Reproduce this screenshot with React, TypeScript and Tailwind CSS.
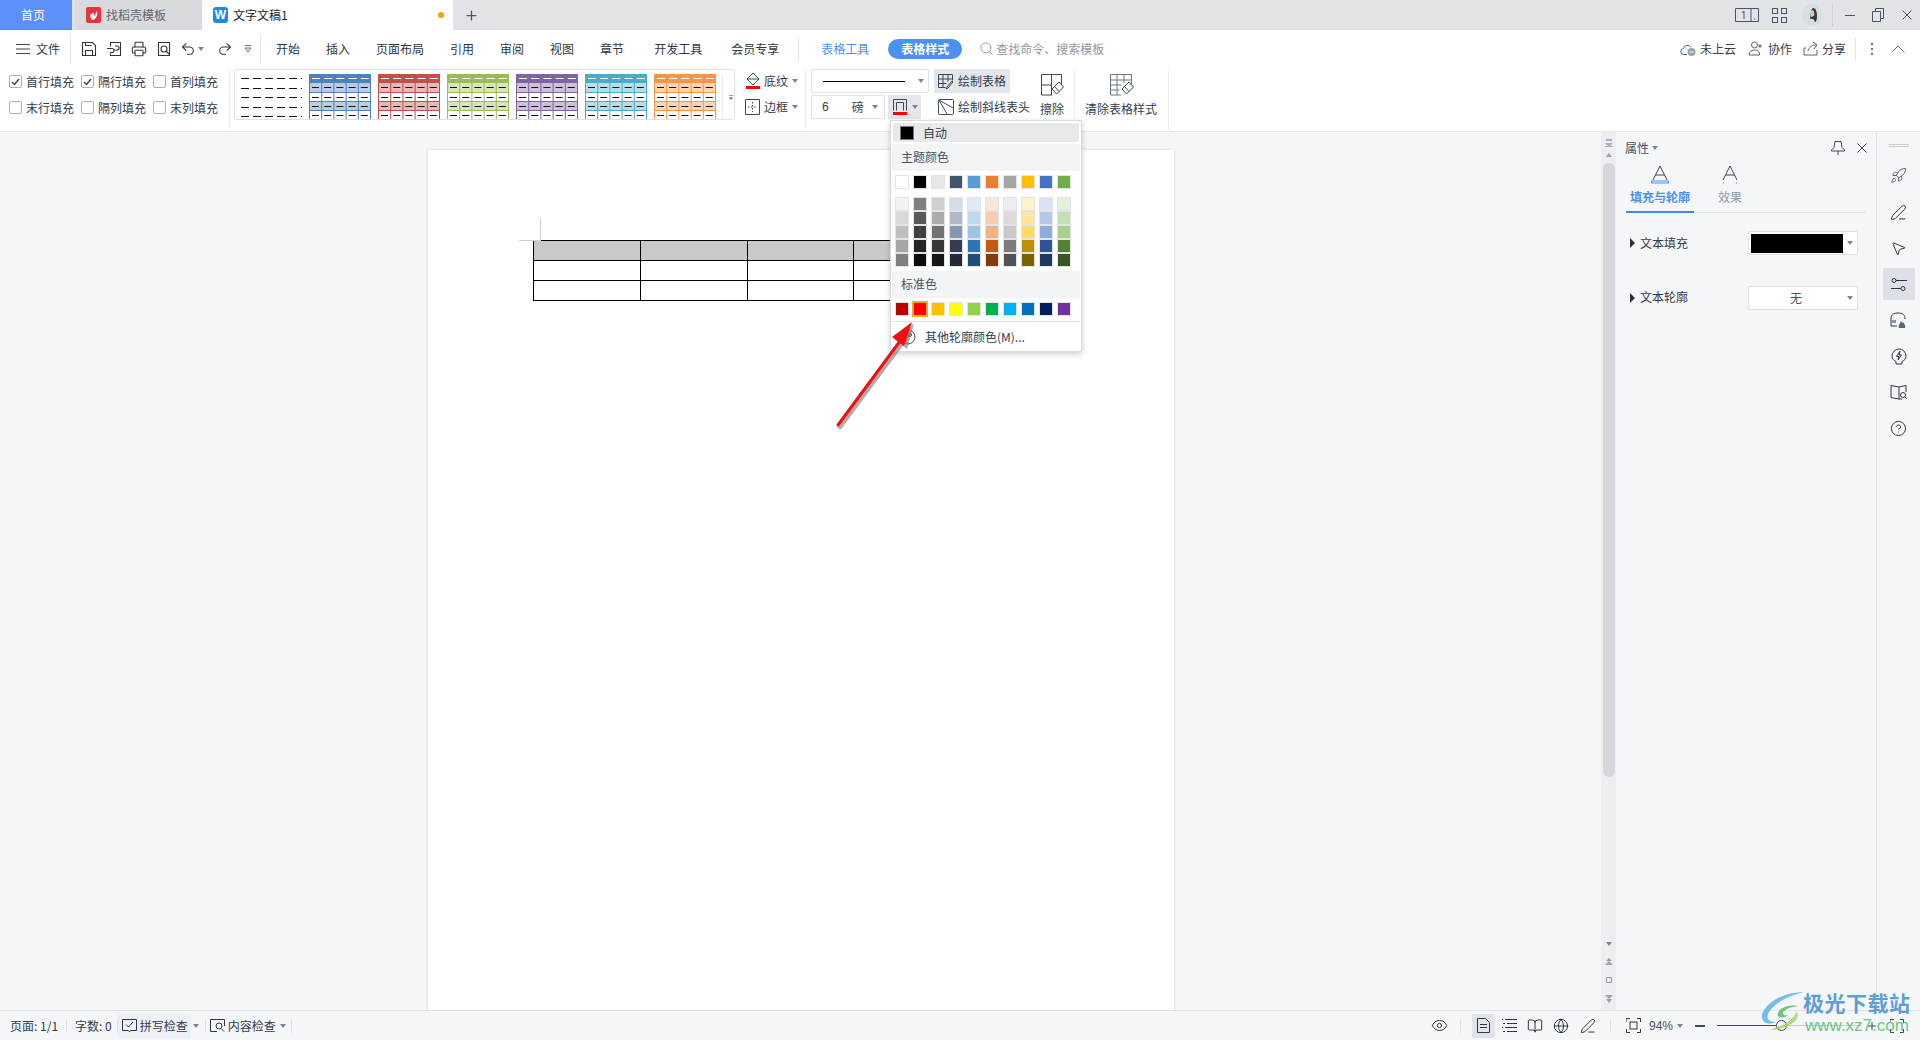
import {
  BookOpen, CircleHelp, Eye, Globe, MousePointer2, PenLine, Plus, Printer,
  Redo2, Rocket, Search, Undo2,
} from 'lucide-react';

const menuItems = ['开始', '插入', '页面布局', '引用', '审阅', '视图', '章节'];

const checks = [
  { label: '首行填充', on: true },
  { label: '隔行填充', on: true },
  { label: '首列填充', on: false },
  { label: '末行填充', on: false },
  { label: '隔列填充', on: false },
  { label: '末列填充', on: false },
];

const tableStyles = [
  { main: '#4f81bd', light: '#b8cce4' },
  { main: '#c0504d', light: '#e6b8b7' },
  { main: '#9bbb59', light: '#d8e4bc' },
  { main: '#8064a2', light: '#ccc0da' },
  { main: '#4bacc6', light: '#b7dee8' },
  { main: '#f79646', light: '#fcd5b4' },
];

const themeRow = ['#ffffff', '#000000', '#e7e6e6', '#44546a', '#5b9bd5', '#ed7d31', '#a5a5a5', '#ffc000', '#4472c4', '#70ad47'];

const themeGrid = [
  ['#f2f2f2', '#808080', '#d0cece', '#d6dce5', '#deebf7', '#fbe5d6', '#ededed', '#fff2cc', '#dae3f3', '#e2f0d9'],
  ['#d9d9d9', '#595959', '#aeabab', '#adb9ca', '#bdd7ee', '#f8cbad', '#dbdbdb', '#ffe699', '#b4c7e7', '#c5e0b4'],
  ['#bfbfbf', '#404040', '#767171', '#8497b0', '#9dc3e6', '#f4b183', '#c9c9c9', '#ffd966', '#8faadc', '#a9d18e'],
  ['#a6a6a6', '#262626', '#3b3838', '#333f50', '#2e75b6', '#c55a11', '#7c7c7c', '#bf9000', '#2f5597', '#548235'],
  ['#808080', '#0d0d0d', '#181717', '#222a35', '#1f4e79', '#843c0c', '#525252', '#7f6000', '#203864', '#385723'],
];

const standardRow = ['#c00000', '#ff0000', '#ffc000', '#ffff00', '#92d050', '#00b050', '#00b0f0', '#0070c0', '#002060', '#7030a0'];

function Caret({ className = '' }: { className?: string }) {
  return <span className={`inline-block w-0 h-0 border-x-[3px] border-x-transparent border-t-[4px] border-t-[#7b8494] ${className}`} />;
}

function Swatch({ color, selected }: { color: string; selected?: boolean }) {
  return (
    <div className={`w-[14px] h-[14px] border ${selected ? 'border-[#f5a623] outline outline-1 outline-[#f5a623]' : 'border-[#e2e3e6]'}`} style={{ backgroundColor: color }} />
  );
}

function StyleThumb({ main, light }: { main: string; light: string }) {
  const cols = [0, 1, 2, 3, 4];
  const rows = [
    { y: 9, h: 10, fill: light },
    { y: 19, h: 9, fill: '#ffffff' },
    { y: 28, h: 9, fill: light },
    { y: 37, h: 9, fill: '#ffffff' },
  ];
  return (
    <svg width="62" height="46" className="shrink-0">
      <rect x="0" y="0" width="62" height="9" fill={main} />
      {cols.map((c) => <rect key={c} x={3 + c * 12.2} y="4" width="8" height="1" fill="#fff" />)}
      {rows.map((r) => (
        <g key={r.y}>
          <rect x="0" y={r.y} width="62" height={r.h} fill={r.fill} />
          <rect x="0" y={r.y + r.h - 1} width="62" height="1" fill={main} />
          {cols.map((c) => <rect key={c} x={3 + c * 12.2} y={r.y + 4} width="7" height="1" fill="#111" />)}
        </g>
      ))}
      {[0, 1, 2, 3, 4, 5].map((c) => <rect key={c} x={c === 5 ? 61 : c * 12.2} y="9" width="1" height="37" fill={main} />)}
    </svg>
  );
}

function PlainThumb() {
  return (
    <svg width="62" height="46" className="shrink-0">
      {[4, 14, 23, 33, 42].map((y) => (
        <g key={y}>
          {[0, 1, 2, 3, 4, 5].map((c) => <rect key={c} x={1 + c * 12} y={y} width="8" height="1" fill="#111" />)}
        </g>
      ))}
    </svg>
  );
}

function IconBox({ children, size = 16 }: { children: React.ReactNode; size?: number }) {
  return (
    <svg width={size} height={size} viewBox="0 0 16 16" fill="none" stroke="#2f3643" strokeWidth="1.1" className="shrink-0">
      {children}
    </svg>
  );
}

function CloseIcon({ color, className = '' }: { color: string; className?: string }) {
  return (
    <svg width="10" height="10" viewBox="0 0 10 10" fill="none" stroke={color} className={`shrink-0 ${className}`}>
      <path d="M.5.5l9 9M9.500.5l-9 9" />
    </svg>
  );
}

export default function App() {
  return (
    <div className="relative w-[1920px] h-[1040px] overflow-hidden flex flex-col bg-[#f5f6f8] text-[12px] text-[#333c4c] font-['Noto_Sans_CJK_SC','Liberation_Sans',sans-serif]">
      {/* title bar */}
      <div className="h-[30px] shrink-0 bg-[#e1e3e7] flex items-stretch">
        <div className="w-[72px] pr-[6px] bg-[#5d8ff9] text-white flex items-center justify-center">首页</div>
        <div className="ml-[3px] w-[127px] bg-[#d9dade] flex items-center pl-[11px] text-[#5f6670]">
          <svg width="15" height="16" viewBox="0 0 15 16" className="shrink-0">
            <rect width="15" height="16" rx="2" fill="#e8323c" />
            <path d="M4 8c0 3 2 5 3 5 3-1 5-5 4-9-1 2-2 3-3 6 0-2 0-4-1-5 0 2-3 2-3 3z" fill="#fff" />
          </svg>
          <span className="ml-[5px]">找稻壳模板</span>
        </div>
        <div className="w-[251px] bg-white flex items-center pl-[11px] text-[#222]">
          <div className="w-[15px] h-[16px] rounded-[3px] bg-[#1e88e5] text-white text-[12px] font-bold flex items-center justify-center font-['Liberation_Sans',sans-serif]">W</div>
          <span className="ml-[5px]">文字文稿1</span>
          <span className="ml-[150px] w-[6px] h-[6px] rounded-full bg-[#f0a30a]" />
        </div>
        <div className="ml-[11px] flex items-center"><Plus size={15} color="#4a5468" strokeWidth={2} /></div>
        <div className="flex-1" />
        <div className="flex items-center">
          <svg width="24" height="14" viewBox="0 0 24 14" fill="none" stroke="#4a5468">
            <path d="M.5.5h23v13H.5zM16 .5v13" />
            <path d="M9 3.500l-2 1M9 3v8" />
            <path d="M19 11h1" />
          </svg>
          <div className="ml-[13px] grid grid-cols-2 gap-[3px]">
            <div className="w-[6px] h-[6px] border border-[#4a5468]" />
            <div className="w-[6px] h-[6px] border border-[#4a5468]" />
            <div className="w-[6px] h-[6px] border border-[#4a5468]" />
            <div className="w-[6px] h-[6px] border border-[#4a5468]" />
          </div>
          <svg width="20" height="22" viewBox="0 0 20 22" className="ml-[15px]">
            <ellipse cx="10" cy="11" rx="10" ry="11" fill="#d3dfe3" />
            <path d="M11 4c3 0 4 4 4 8s-1 6-2 6c-1-3-2-4-5-3 1-3 0-9 3-11z" fill="#3b3236" />
            <path d="M10 6c2 0 3 3 2 6l-3 1c-1-3-1-5 1-7z" fill="#e6c3b4" />
          </svg>
          <div className="ml-[10px] w-px h-[22px] bg-[#cfd2d8]" />
          <div className="ml-[12px] w-[10px] h-px bg-[#4a5468]" />
          <svg width="12" height="14" viewBox="0 0 12 14" fill="none" stroke="#4a5468" className="ml-[17px]">
            <path d="M.5 3.500h8v10h-8zM3.500 3.500v-3h8v10h-3" />
          </svg>
          <CloseIcon color="#4a5468" className="ml-[18px] mr-[8px]" />
        </div>
      </div>

      {/* ribbon */}
      <div className="h-[102px] shrink-0 bg-white border-b border-[#e6e7ea] flex flex-col">
        <div className="h-[39px] shrink-0 flex items-center pb-[2px]">
          <svg width="14" height="10" viewBox="0 0 14 10" stroke="#3d4757" className="ml-[16px]"><path d="M0 .5h14M0 5h14M0 9.500h14" /></svg>
          <span className="ml-[6px]">文件</span>
          <div className="ml-[10px] w-px h-[30px] bg-[#e0e2e6]" />
          <div className="ml-[10px] flex items-center gap-[9px]">
            <IconBox>
              <path d="M1.500 1.500h10l3 3v10h-13zM4.500 14.500v-5h7v5M4.500 1.500v3h6" />
            </IconBox>
            <IconBox>
              <path d="M4.500 5.500v-4h10v13h-10v-2M1 7.500h5a2 2 0 010 4H4M9 5h2a2 2 0 010 4H8" />
            </IconBox>
            <Printer size={16} color="#2f3643" strokeWidth={1.6} />
            <IconBox>
              <path d="M13.500 14.500h-11v-13h11z" /><circle cx="8" cy="8" r="3" /><path d="M10 10l3 3" />
            </IconBox>
          </div>
          <Undo2 size={16} color="#2f3643" strokeWidth={1.6} className="ml-[8px]" />
          <Caret className="ml-[2px]" />
          <Redo2 size={16} color="#2f3643" strokeWidth={1.6} className="ml-[13px]" />
          <svg width="8" height="8" viewBox="0 0 8 8" fill="none" stroke="#6b7484" className="ml-[11px]"><path d="M1 .5h6M1 3l3 4 3-4z" /></svg>
          <div className="ml-[8px] w-px h-[30px] bg-[#e0e2e6]" />
          <div className="ml-[15px] flex items-center gap-[26px] text-[#2f3643]">
            {menuItems.map((m) => <span key={m}>{m}</span>)}
            <span className="ml-[4px]">开发工具</span>
            <span className="ml-[3px]">会员专享</span>
          </div>
          <div className="ml-[19px] w-px h-[24px] bg-[#e0e2e6]" />
          <span className="ml-[22px] text-[#4b91f1]">表格工具</span>
          <span className="ml-[19px] w-[74px] h-[20px] rounded-full bg-[#4b91f1] text-white font-bold flex items-center justify-center">表格样式</span>
          <Search size={15} color="#8f97a5" strokeWidth={1.5} className="ml-[17px]" />
          <span className="ml-[2px] text-[#8f97a5]">查找命令、搜索模板</span>
          <div className="flex-1" />
          <svg width="16" height="16" viewBox="0 0 16 16" fill="none" stroke="#5a6475">
            <path d="M7 13.500H4a3 3 0 01-.5-6 4 4 0 017.500-1" />
            <circle cx="11.500" cy="11" r="4" fill="#9aa3b2" stroke="none" />
            <path d="M9.500 11h4" stroke="#fff" />
          </svg>
          <span className="ml-[4px]">未上云</span>
          <svg width="15" height="15" viewBox="0 0 15 15" fill="none" stroke="#5a6475" className="ml-[12px]">
            <circle cx="6.500" cy="4" r="3" /><path d="M1 14c0-3 2-5 5.500-5s4 1 5 3v2zM12 3v4M10 5h4" />
          </svg>
          <span className="ml-[5px]">协作</span>
          <svg width="15" height="15" viewBox="0 0 15 15" fill="none" stroke="#5a6475" className="ml-[11px]">
            <path d="M3 7H1v7h13V9M5 10c1-4 4-6 8-6M10 1l4 3-3 4" />
          </svg>
          <span className="ml-[4px]">分享</span>
          <div className="ml-[9px] w-px h-[24px] bg-[#e0e2e6]" />
          <div className="ml-[15px] flex flex-col gap-[3px]">
            <span className="w-[2px] h-[2px] bg-[#6b7484]" />
            <span className="w-[2px] h-[2px] bg-[#6b7484]" />
            <span className="w-[2px] h-[2px] bg-[#6b7484]" />
          </div>
          <svg width="14" height="8" viewBox="0 0 14 8" fill="none" stroke="#6b7484" className="ml-[18px] mr-[15px]"><path d="M.5 7.500L7 1l6.500 6.500" /></svg>
        </div>

        <div className="flex items-start h-[63px]">
          <div className="w-[230px] h-[61px] border-r border-[#eceef0] pl-[9px] shrink-0">
            <div className="grid grid-cols-[72px_72px_72px] grid-rows-[25px_25px] gap-y-px">
              {checks.map((c) => (
                <div key={c.label} className="flex items-center">
                  <div className="w-[13px] h-[13px] rounded-[2px] border border-[#a9afb9] flex items-center justify-center">
                    {c.on && <svg width="9" height="8" viewBox="0 0 9 8" fill="none" stroke="#3d4757" strokeWidth="1.5"><path d="M1 4l2.500 2.500L8 1" /></svg>}
                  </div>
                  <span className="ml-[4px]">{c.label}</span>
                </div>
              ))}
            </div>
          </div>

          <div className="ml-[4px] w-[501px] h-[51px] border border-[#dfe1e5] rounded-[3px] flex items-start overflow-hidden pl-[5px] pt-[4px] shrink-0">
            <PlainThumb />
            <div className="ml-[7px] flex gap-[7px]">
              {tableStyles.map((s) => <StyleThumb key={s.main} main={s.main} light={s.light} />)}
            </div>
            <div className="ml-[6px] w-px h-[46px] bg-[#eceef0]" />
            <svg width="8" height="8" viewBox="0 0 8 8" fill="#7b8494" className="ml-[5px] mt-[20px]"><path d="M1 0h6v1H1zM1 3h6L4 7z" /></svg>
          </div>

          <div className="ml-[10px] w-[61px] h-[61px] border-r border-[#eceef0] shrink-0 flex flex-col gap-[2px]">
            <div className="h-[24px] flex items-center">
              <svg width="16" height="18" viewBox="0 0 16 18" fill="none" stroke="#3d4757">
                <path d="M8 1l6 6-6 6-6-6zM2 7h12" />
                <rect x="1" y="14" width="14" height="3" fill="#ff0000" stroke="none" />
              </svg>
              <span className="ml-[3px]">底纹</span>
              <Caret className="ml-[4px]" />
            </div>
            <div className="h-[24px] flex items-center">
              <svg width="15" height="16" viewBox="0 0 15 16" fill="none" stroke="#3d4757">
                <path d="M.5.5h14v15H.5z" /><path d="M7.500 3v10M3 8h9" strokeDasharray="1.5 1.5" />
              </svg>
              <span className="ml-[4px]">边框</span>
              <Caret className="ml-[4px]" />
            </div>
          </div>

          <div className="ml-[5px] w-[118px] shrink-0 flex flex-col gap-[2px]">
            <div className="h-[24px] border border-[#dfe1e5] rounded-[2px] flex items-center pl-[11px] pr-[4px]">
              <div className="w-[82px] h-px bg-black" />
              <Caret className="ml-[13px]" />
            </div>
            <div className="h-[24px] flex gap-[3px]">
              <div className="w-[74px] border border-[#dfe1e5] rounded-[2px] flex items-center pl-[10px] pr-[4px]">
                <span className="font-['Liberation_Sans',sans-serif]">6</span>
                <span className="ml-[23px]">磅</span>
                <Caret className="ml-[8px]" />
              </div>
              <div className="w-[33px] bg-[#e4e6ea] flex items-center pl-[5px]">
                <svg width="15" height="17" viewBox="0 0 15 17" fill="none" stroke="#3d4757">
                  <path d="M.5.5h13v11M.5.5v11M3.500 3.500h7v8M3.500 3.500v8" />
                  <rect x="0" y="13" width="14" height="3" fill="#ff0000" stroke="none" />
                </svg>
                <Caret className="ml-[4px]" />
              </div>
            </div>
          </div>

          <div className="ml-[5px] w-[96px] shrink-0 flex flex-col gap-[2px]">
            <div className="w-[76px] h-[24px] bg-[#e3e6ea] flex items-center pl-[4px]">
              <svg width="17" height="17" viewBox="0 0 17 17" fill="none" stroke="#3d4757">
                <path d="M.5 1.500h14v6M.5 1.500v13h7M.5 6h14M.5 10.500h8M5 1.500v13M10 1.500v7M15 9l-5 6-2 1 1-2 5-6z" />
              </svg>
              <span className="ml-[3px]">绘制表格</span>
            </div>
            <div className="h-[24px] flex items-center pl-[4px] whitespace-nowrap">
              <svg width="16" height="16" viewBox="0 0 16 16" fill="none" stroke="#3d4757">
                <rect x=".5" y=".5" width="15" height="15" rx="1" /><path d="M1 1l14 8M1 1l8 14" />
              </svg>
              <span className="ml-[4px]">绘制斜线表头</span>
            </div>
          </div>

          <div className="ml-[10px] w-[24px] shrink-0 flex flex-col items-center pt-[4px]">
            <svg width="24" height="24" viewBox="0 0 24 24" fill="none" stroke="#3d4757" className="shrink-0">
              <path d="M12 22H1.500V1.500h20V12M1.500 12h10.500M11.500 1.500V22" />
              <path d="M19 9l4.500 5-7 7-4.500-5z" fill="#fff" /><path d="M14.500 13.500l4.500 5" />
            </svg>
            <span className="mt-[3px] whitespace-nowrap">擦除</span>
          </div>

          <div className="ml-[10px] w-px h-[61px] bg-[#eceef0] shrink-0" />

          <div className="ml-[10px] w-[72px] shrink-0 flex flex-col items-center pt-[4px]">
            <svg width="25" height="24" viewBox="0 0 25 24" fill="none" stroke="#6b7484" className="shrink-0">
              <path d="M12 22H1.500V1.500h21V12M1.500 7h21M1.500 12h11M1.500 17h9M8 1.500V22M15 1.500V10" />
              <path d="M20 9l4.500 5-7 7-4.500-5z" fill="#fff" stroke="#3d4757" /><path d="M15.500 13.500l4.500 5" stroke="#3d4757" />
            </svg>
            <span className="mt-[3px] whitespace-nowrap">清除表格样式</span>
          </div>

          <div className="ml-[11px] w-px h-[61px] bg-[#eceef0] shrink-0" />
        </div>
      </div>

      {/* body */}
      <div className="flex-1 min-h-0 flex">
        <div className="w-[1601px] shrink-0 pl-[428px] pt-[18px] overflow-hidden">
          <div className="relative w-[746px] h-[900px] bg-white shadow-[0_0_3px_rgba(0,0,0,0.15)] pl-[105px] pt-[90px]">
            <div className="absolute left-[112px] top-[68px] w-px h-[22px] bg-[#cfcfcf]" />
            <div className="absolute left-[91px] top-[90px] w-[22px] h-px bg-[#cfcfcf]" />
            <table className="border-collapse w-[428px] table-fixed">
              <tbody>
                <tr className="h-[20px]">
                  {[0, 1, 2, 3].map((i) => <td key={i} className="border border-black bg-[#c8c8c8]" />)}
                </tr>
                <tr className="h-[20px]">
                  {[0, 1, 2, 3].map((i) => <td key={i} className="border border-black" />)}
                </tr>
                <tr className="h-[20px]">
                  {[0, 1, 2, 3].map((i) => <td key={i} className="border border-black" />)}
                </tr>
              </tbody>
            </table>
          </div>
        </div>

        {/* doc scrollbar */}
        <div className="w-[15px] shrink-0 bg-[#eceef1] flex flex-col items-center">
          <svg width="8" height="8" viewBox="0 0 8 8" fill="#a9afb9" className="mt-[7px] shrink-0"><path d="M1 0h6v2H1zM0 4h8L4 8zM0 7h8v1H0z" /></svg>
          <span className="mt-[6px] w-0 h-0 border-x-[3px] border-x-transparent border-b-[4px] border-b-[#9aa1ad]" />
          <div className="mt-[6px] w-[12px] h-[614px] rounded-full bg-[#d3d6dd]" />
          <div className="flex-1" />
          <Caret className="mb-[12px]" />
          <svg width="8" height="8" viewBox="0 0 8 8" fill="#9aa1ad" className="mb-[11px]"><path d="M4 0l3 3H1zM4 3l4 4H0z" /></svg>
          <div className="w-[6px] h-[6px] rounded-[1px] border border-[#8b92a0] mb-[12px]" />
          <svg width="8" height="8" viewBox="0 0 8 8" fill="#9aa1ad" className="mb-[7px]"><path d="M0 0h8L4 4zM1 4h6L4 8z" /></svg>
        </div>

        {/* properties panel */}
        <div className="w-[261px] shrink-0 bg-[#f5f6f8] border-r border-[#e1e3e7]">
          <div className="h-[31px] pl-[9px] pr-[9px] flex items-center">
            <span className="text-[#4a5260]">属性</span>
            <Caret className="ml-[3px]" />
            <div className="flex-1" />
            <svg width="14" height="14" viewBox="0 0 14 14" fill="none" stroke="#3d4757"><path d="M4 .5h6l1 6 2.500 2.500v1H.5V9L3 6.500zM7 10v4" /></svg>
            <CloseIcon color="#3d4757" className="ml-[12px]" />
          </div>
          <div className="ml-[10px] mr-[10px] h-[50px] border-b border-[#e1e3e7] flex">
            <div className="w-[68px] h-[50px] border-b-2 border-[#3d87ea] flex flex-col items-center">
              <svg width="18" height="19" viewBox="0 0 18 19" fill="none" stroke="#3d4757" className="mt-[2px] shrink-0">
                <path d="M2 15L9 1l7 14M4.500 10h9" />
                <rect x=".5" y="16" width="17" height="2" stroke="#4b91f1" />
              </svg>
              <span className="mt-[4px] text-[#4b91f1] font-bold whitespace-nowrap">填充与轮廓</span>
            </div>
            <div className="ml-[24px] flex flex-col items-center">
              <svg width="18" height="19" viewBox="0 0 18 19" fill="none" stroke="#3d4757" className="mt-[2px] shrink-0">
                <path d="M2 15L9 1l7 14M4.500 10h9" />
                <path d="M2 18h1M15 18h1" stroke="#4b91f1" />
              </svg>
              <span className="mt-[4px] text-[#8f97a5]">效果</span>
            </div>
          </div>
          <div className="mt-[18px] pl-[14px] flex items-center h-[24px]">
            <span className="w-0 h-0 border-y-[5px] border-y-transparent border-l-[5px] border-l-[#2a3140]" />
            <span className="ml-[5px] w-[108px]">文本填充</span>
            <div className="w-[110px] h-[24px] bg-white border border-[#dfe1e5] rounded-[2px] flex items-center pl-[2px]">
              <div className="w-[92px] h-[19px] bg-black" />
              <Caret className="ml-[4px]" />
            </div>
          </div>
          <div className="mt-[31px] pl-[14px] flex items-center h-[24px]">
            <span className="w-0 h-0 border-y-[5px] border-y-transparent border-l-[5px] border-l-[#2a3140]" />
            <span className="ml-[5px] w-[108px] pb-[2px]">文本轮廓</span>
            <div className="w-[110px] h-[24px] bg-white border border-[#dfe1e5] rounded-[2px] flex items-center">
              <span className="ml-[35px] w-[24px] text-center text-[#4a5260]">无</span>
              <Caret className="ml-[39px]" />
            </div>
          </div>
        </div>

        {/* right icon rail */}
        <div className="flex-1 flex flex-col items-center">
          <div className="mt-[12px] w-[20px] h-[3px] border-y border-[#c9ccd2]" />
          <div className="mt-[18px] h-[20px] flex items-center"><Rocket size={17} color="#5a6475" strokeWidth={1.4} /></div>
          <div className="mt-[17px] h-[20px] flex items-center"><PenLine size={17} color="#2f3643" strokeWidth={1.4} /></div>
          <div className="mt-[16px] h-[20px] flex items-center"><MousePointer2 size={17} color="#2f3643" strokeWidth={1.4} /></div>
          <div className="mt-[10px] w-[32px] h-[32px] bg-[#dde0e6] rounded-[2px] flex items-center justify-center">
            <svg width="16" height="13" viewBox="0 0 16 13" fill="none" stroke="#2f3643"><circle cx="3" cy="2.500" r="2" /><path d="M5 2.500h11M0 10.500h10" /><circle cx="12" cy="10.500" r="2" /></svg>
          </div>
          <div className="mt-[10px] h-[20px] flex items-center">
            <svg width="17" height="17" viewBox="0 0 17 17" fill="none" stroke="#2f3643">
              <path d="M1 7c0-4 2-6 7-6s7 2 7 6M1 7v7h6M3 8v3M5 8v3" />
              <path d="M9 16c-1-3 1-4 2-7 1 2 1 2 2 1 1 2 3 3 2 6z" fill="#5a6475" stroke="none" />
            </svg>
          </div>
          <div className="mt-[16px] h-[20px] flex items-center">
            <svg width="16" height="17" viewBox="0 0 16 17" fill="none" stroke="#2f3643">
              <path d="M5 13.500C2.500 12.500 1 10.500 1 8a7 7 0 0114 0c0 2.500-1.500 4.500-4 5.500V16H5z" />
              <path d="M9 3L5.500 8.500H8L7 12l3.500-5H8z" />
            </svg>
          </div>
          <div className="mt-[16px] h-[20px] flex items-center">
            <svg width="17" height="15" viewBox="0 0 17 15" fill="none" stroke="#2f3643">
              <path d="M9 2L1 .5v12L9 14zM9 2l7-1.500V7M9 14h3" /><circle cx="13" cy="10" r="2.500" /><path d="M15 12l1.500 1.500" />
            </svg>
          </div>
          <div className="mt-[16px] h-[20px] flex items-center"><CircleHelp size={17} color="#2f3643" strokeWidth={1.4} /></div>
        </div>
      </div>

      {/* status bar */}
      <div className="h-[30px] shrink-0 border-t border-[#e1e3e7] bg-[#f5f6f8] flex items-center">
        <span className="ml-[10px]">页面: 1/1</span>
        <div className="ml-[8px] w-px h-[14px] bg-[#dfe1e5]" />
        <span className="ml-[8px]">字数: 0</span>
        <div className="ml-[5px] w-px h-[14px] bg-[#dfe1e5]" />
        <div className="w-[73px] h-[24px] bg-[#edf1f7] flex items-center pl-[4px]">
          <svg width="15" height="13" viewBox="0 0 15 13" fill="none" stroke="#2f3643"><path d="M.5.5h14v11H9l-1.500 1L6 11.500H.5zM4 5.500l2.500 2.500L11 3" /></svg>
          <span className="ml-[3px]">拼写检查</span>
        </div>
        <Caret className="ml-[2px]" />
        <div className="ml-[6px] w-px h-[14px] bg-[#dfe1e5]" />
        <svg width="15" height="13" viewBox="0 0 15 13" fill="none" stroke="#2f3643" className="ml-[4px]"><path d="M14.500 7V.5H.5v12H7" /><circle cx="9" cy="7" r="3" /><path d="M11 9.500l3 3" /></svg>
        <span className="ml-[3px]">内容检查</span>
        <Caret className="ml-[4px]" />
        <div className="ml-[5px] w-px h-[14px] bg-[#dfe1e5]" />
        <div className="flex-1" />
        <Eye size={17} color="#2f3643" strokeWidth={1.4} />
        <div className="ml-[12px] w-px h-[14px] bg-[#dfe1e5]" />
        <div className="ml-[11px] w-[23px] h-[24px] bg-[#e0e3e8] rounded-[2px] flex items-center justify-center">
          <svg width="13" height="15" viewBox="0 0 13 15" fill="none" stroke="#2f3643"><path d="M.5.5h8l4 4v10H.5zM3 6.500h7M3 9.500h7" /></svg>
        </div>
        <svg width="15" height="13" viewBox="0 0 15 13" fill="none" stroke="#2f3643" className="ml-[7px]"><path d="M3 .5h12M5 4.500h10M3 8.500h12M5 12.500h10M0 .5h1M1 4.500h2M0 8.500h1M1 12.500h2" /></svg>
        <BookOpen size={16} color="#2f3643" strokeWidth={1.5} className="ml-[10px]" />
        <Globe size={16} color="#2f3643" strokeWidth={1.5} className="ml-[10px]" />
        <PenLine size={16} color="#2f3643" strokeWidth={1.5} className="ml-[11px]" />
        <div className="ml-[14px] w-px h-[14px] bg-[#dfe1e5]" />
        <svg width="15" height="15" viewBox="0 0 15 15" fill="none" stroke="#2f3643" className="ml-[15px]"><path d="M0 4V.5h4M11 .5h3.500V4M14.500 11v3.500H11M4 14.500H.5V11" /><rect x="4" y="4" width="7" height="7" /></svg>
        <span className="ml-[8px] text-[#4a5260] font-['Liberation_Sans',sans-serif]">94%</span>
        <Caret className="ml-[4px]" />
        <div className="ml-[12px] w-[10px] h-[2px] bg-[#3d4757]" />
        <div className="ml-[12px] w-[59px] h-px bg-[#3d4757]" />
        <div className="w-[11px] h-[11px] rounded-full border border-[#3d4757] bg-transparent" />
        <div className="w-[75px] h-px bg-[#c9ccd2]" />
        <Plus size={12} color="#3d4757" strokeWidth={2} className="ml-[4px]" />
        <svg width="14" height="14" viewBox="0 0 14 14" fill="none" stroke="#3d4757" className="ml-[12px] mr-[16px]"><path d="M0 4V.5h4M10 .5h3.500V4M13.500 10v3.500H10M4 13.500H.5V10" /></svg>
      </div>

      {/* colour dropdown */}
      <div className="absolute left-[890px] top-[120px] w-[192px] h-[232px] bg-white border border-[#d9dbdf] shadow-[0_2px_6px_rgba(0,0,0,0.2)] px-[1px] pt-[2px] flex flex-col">
        <div className="h-[19px] shrink-0 bg-[#e7e9ed] rounded-[2px] flex items-center pl-[7px] mx-[1px]">
          <div className="w-[14px] h-[14px] bg-black border border-[#777]" />
          <span className="ml-[9px]">自动</span>
        </div>
        <div className="mt-[2px] h-[27px] shrink-0 bg-[#f3f4f6] flex items-center pl-[9px] pb-[2px] text-[#4a5260]">主题颜色</div>
        <div className="mt-[4px] pl-[3px] flex gap-[4px] shrink-0">
          {themeRow.map((c) => <Swatch key={c} color={c} />)}
        </div>
        <div className="mt-[8px] pl-[3px] flex flex-col shrink-0">
          {themeGrid.map((row, i) => (
            <div key={i} className="flex gap-[4px]">
              {row.map((c, j) => <Swatch key={j} color={c} />)}
            </div>
          ))}
        </div>
        <div className="mt-[4px] h-[27px] shrink-0 bg-[#f3f4f6] flex items-center pl-[9px] pb-[2px] text-[#4a5260]">标准色</div>
        <div className="mt-[4px] pl-[3px] flex gap-[4px] shrink-0">
          {standardRow.map((c, i) => <Swatch key={c} color={c} selected={i === 1} />)}
        </div>
        <div className="mt-[5px] h-px bg-[#dfe1e5] shrink-0" />
        <div className="flex-1 flex items-center pl-[8px]">
          <svg width="16" height="16" viewBox="0 0 16 16" fill="none" stroke="#3d4757"><circle cx="8" cy="8" r="7" /><circle cx="10" cy="6" r="1.500" /></svg>
          <span className="ml-[9px]">其他轮廓颜色(M)...</span>
        </div>
      </div>

      {/* red annotation arrow */}
      <svg width="100" height="120" viewBox="0 0 100 120" className="absolute left-[830px] top-[315px]">
        <path d="M10 112L79 19" stroke="#777" strokeWidth="4.5" strokeLinecap="round" opacity="0.6" />
        <path d="M84 9l-20 15 13 10z" fill="#777" opacity="0.6" />
        <path d="M8 110L76 18" stroke="#f01010" strokeWidth="3" strokeLinecap="round" />
        <path d="M82 7L62 22l12 9z" fill="#f01010" />
      </svg>

      {/* watermark */}
      <div className="absolute left-[1760px] top-[988px] w-[160px] h-[52px] overflow-hidden">
        <svg width="46" height="44" viewBox="0 0 46 44" className="absolute left-0 top-[2px]">
          <path d="M44 2C26 2 8 10 2 24c-2 8 6 12 14 8-6 0-10-2-8-8C12 14 28 6 44 2z" fill="#5db4ec" opacity="0.85" />
          <path d="M38 16C26 14 16 20 18 26c2 2 8 2 10-1-3 1-6 0-5-3 2-3 8-5 15-6z" fill="#5db86a" opacity="0.85" />
          <path d="M36 22c-2 8-14 14-26 18 12 0 28-6 28-16z" fill="#a5d65a" opacity="0.8" />
        </svg>
        <span className="absolute left-[43px] top-[0px] text-[21px] leading-[28px] font-bold text-[#4f94d4] opacity-90 whitespace-nowrap tracking-[0.5px]">极光下载站</span>
        <span className="absolute left-[45px] top-[28px] text-[17px] leading-[20px] text-[#5cc27a] opacity-90 whitespace-nowrap font-['Liberation_Sans',sans-serif]">www.xz7.com</span>
      </div>
    </div>
  );
}
